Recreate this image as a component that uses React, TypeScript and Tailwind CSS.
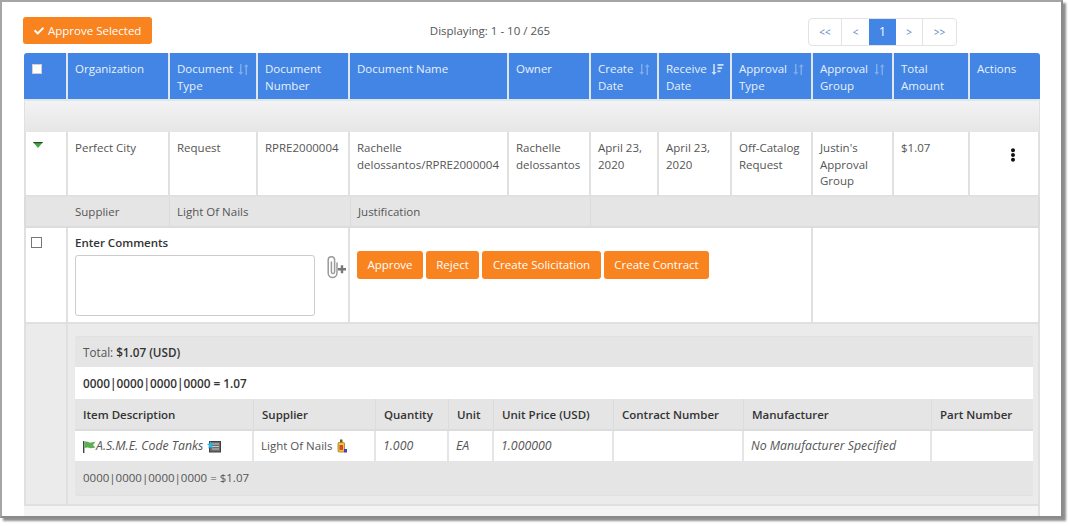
import React from 'react';
import { FaCheck, FaEllipsisV } from 'react-icons/fa';

const SortIcon = ({ active = false }: { active?: boolean }) =>
  active ? (
    <svg width="13" height="13" viewBox="0 0 13 13" className="shrink-0 text-[#cfe0f8]" fill="currentColor">
      <path d="M2.2 1h1.6v8h1.7L3 12 .5 9h1.7z" />
      <rect x="6.5" y="1" width="6" height="1.8" />
      <rect x="6.5" y="4.2" width="4.6" height="1.8" />
      <rect x="6.5" y="7.4" width="3" height="1.8" />
    </svg>
  ) : (
    <svg width="13" height="13" viewBox="0 0 13 13" className="shrink-0 text-[#7fabec]" fill="currentColor">
      <path d="M3 1h1.5v8h1.6L3.8 12 1.4 9H3z" />
      <path d="M8.5 12H10V4h1.6L9.3 1 6.9 4h1.6z" />
    </svg>
  );

const PaperclipPlus = () => (
  <svg width="22" height="24" viewBox="0 0 22 24" fill="none" className="shrink-0 ml-[10px]">
    <path
      d="M12 8v10a4.4 4.4 0 0 1-8.8 0V5a3.2 3.2 0 0 1 6.4 0v12a1.6 1.6 0 0 1-3.2 0V7"
      stroke="#9a9a9a"
      strokeWidth="1.5"
      strokeLinecap="round"
    />
    <path d="M13 14.2h8M17 10.2v8" stroke="#777" strokeWidth="2.4" />
  </svg>
);

const FlagIcon = () => (
  <svg width="13" height="13" viewBox="0 0 13 13" className="shrink-0">
    <rect x="0" y="1" width="1.4" height="12" fill="#444" />
    <path d="M1.4 2c3-1.4 4.4 1 6.6.6 1.4-.2 2.6-.6 4.6-.8L10 5l2.4 2.6c-3 .4-4.6 1-6.6.2-1.6-.6-3-.2-4.4.4z" fill="#5fae57" />
  </svg>
);

const NotesIcon = () => (
  <svg width="14" height="13" viewBox="0 0 14 13" className="shrink-0">
    <rect x="2.5" y="1.5" width="11" height="10.5" fill="#6d6d6d" stroke="#3f3f3f" />
    <path d="M5 4h7M5 6.5h7M5 9h7" stroke="#c9c9c9" />
    <path d="M3.5 1l1 2.6 2.6.4-2 1.7.6 2.7-2.2-1.4L1.3 8.4l.6-2.7-1.9-1.7 2.6-.4z" fill="#2bb5ea" />
  </svg>
);

const BottleIcon = () => (
  <svg width="10" height="14" viewBox="0 0 10 14" className="shrink-0">
    <rect x="3" y="0.5" width="2.5" height="3" fill="#6b5a2a" />
    <rect x="1" y="3.5" width="6.5" height="9.5" rx="1" fill="#f0c53a" stroke="#8a6d1f" strokeWidth="0.7" />
    <rect x="2.5" y="6" width="3.5" height="5" fill="#d8462f" />
    <rect x="7" y="10" width="3" height="3.5" fill="#4a3fb5" />
  </svg>
);

type Head = { label: React.ReactNode; sort?: boolean; active?: boolean };

const heads: Head[] = [
  { label: 'Organization' },
  { label: <>Document<br />Type</>, sort: true },
  { label: <>Document<br />Number</> },
  { label: 'Document Name' },
  { label: 'Owner' },
  { label: <>Create<br />Date</>, sort: true },
  { label: <>Receive<br />Date</>, sort: true, active: true },
  { label: <>Approval<br />Type</>, sort: true },
  { label: <>Approval<br />Group</>, sort: true },
  { label: <>Total<br />Amount</> },
  { label: 'Actions' },
];

const colWidths = [44, 102, 88, 92, 159, 82, 68, 73, 81, 81, 76, 70];

const rowCells: React.ReactNode[] = [
  'Perfect City',
  'Request',
  'RPRE2000004',
  <>Rachelle<br />delossantos/RPRE2000004</>,
  <>Rachelle<br />delossantos</>,
  <>April 23,<br />2020</>,
  <>April 23,<br />2020</>,
  <>Off-Catalog<br />Request</>,
  <>Justin's<br />Approval<br />Group</>,
  '$1.07',
];

const innerCols = [179, 122, 73, 45, 120, 130, 188, 101];
const innerHeads = ['Item Description', 'Supplier', 'Quantity', 'Unit', 'Unit Price (USD)', 'Contract Number', 'Manufacturer', 'Part Number'];

const cellBorder = 'border-r-2 border-b-2 border-[#e0e0e0]';

export default function App() {
  return (
    <div className="w-[1069px] h-[526px] bg-white overflow-hidden">
      <div
        className="w-[1063px] h-[518px] bg-white border-2 border-[#a5a5a5] border-r-[#8a8a8a] border-b-[#8a8a8a] shadow-[3px_3px_2px_#8f8f8f] overflow-hidden text-[11.5px] leading-[16.5px] text-[#555]"
        style={{ fontFamily: '"Open Sans", sans-serif' }}
      >
        <div className="flex items-start h-[51px] pl-[21px] pt-[15px]">
          <button className="flex items-center gap-[4px] w-[129px] h-[27px] pl-[11px] pt-[1px] rounded-[3px] bg-[#f9831f] text-white">
            <FaCheck className="w-[10px] h-[10px]" />
            Approve Selected
          </button>
          <div className="w-[656px] pt-[6px] pl-[20px] text-center">
            Displaying: 1 - 10 / 265
          </div>
          <div className="flex h-[28px] mt-[1px] border border-[#e3e3e3] rounded-[4px] text-[10px] text-[#5b84c4]">
            <span className="w-[33px] flex items-center justify-center border-r border-[#e3e3e3]">&lt;&lt;</span>
            <span className="w-[27px] flex items-center justify-center">&lt;</span>
            <span className="w-[27px] flex items-center justify-center bg-[#4285e5] text-white text-[12px]">1</span>
            <span className="w-[27px] flex items-center justify-center border-r border-[#e3e3e3]">&gt;</span>
            <span className="w-[33px] flex items-center justify-center">&gt;&gt;</span>
          </div>
        </div>

        <table className="ml-[22px] w-[1016px] table-fixed border-separate border-spacing-0">
          <colgroup>
            {colWidths.map((w, i) => (
              <col key={i} style={{ width: w }} />
            ))}
          </colgroup>
          <thead>
            <tr>
              <th className="h-[48px] align-top bg-[#4285e5] border-r-2 border-b-2 border-[#dfe6ee] pl-[8px] pt-[11px] text-left rounded-tl-[3px]">
                <span className="block w-[10px] h-[10px] bg-white border border-[#d0d0d0]" />
              </th>
              {heads.map((h, i) => (
                <th
                  key={i}
                  className={`h-[48px] align-top bg-[#4285e5] border-b-2 border-[#dfe6ee] pl-[7px] pr-[6px] pt-[8px] text-left font-normal text-[#e8f0fb] ${i < heads.length - 1 ? 'border-r-2' : 'rounded-tr-[3px]'}`}
                >
                  <div className="flex justify-between">
                    <span>{h.label}</span>
                    {h.sort && <span className="pt-[2px]"><SortIcon active={h.active} /></span>}
                  </div>
                </th>
              ))}
            </tr>
          </thead>
          <tbody>
            <tr>
              <td colSpan={12} className="h-[31px] bg-linear-to-b from-[#f3f3f3] to-[#e6e6e6] border-l border-r border-[#e0e0e0]" />
            </tr>
            <tr>
              <td className={`h-[65px] align-top border-l-2 pl-[7px] pt-[10px] ${cellBorder}`}>
                <svg width="10" height="6" viewBox="0 0 10 6" className="block">
                  <path d="M0 0h10L5 6z" fill="#3fa84a" />
                  <path d="M0 0h10L9 1.3H1z" fill="#244a2a" />
                </svg>
              </td>
              {rowCells.map((c, i) => (
                <td key={i} className={`align-top pl-[7px] pt-[8px] ${cellBorder}`}>{c}</td>
              ))}
              <td className="align-top border-b-2 border-r-2 border-[#e0e0e0] pt-[16px] pl-[37px] text-[#111]">
                <FaEllipsisV className="w-[12px] h-[14px]" />
              </td>
            </tr>
            <tr className="bg-[#e5e5e5]">
              <td className="h-[31px] border-l-2 border-b-2 border-[#dcdcdc]" />
              <td className="pl-[7px] pt-[2px] border-b-2 border-r border-[#dcdcdc]">Supplier</td>
              <td colSpan={2} className="pl-[7px] pt-[2px] border-b-2 border-[#dcdcdc]">Light Of Nails</td>
              <td colSpan={2} className="pl-[7px] pt-[2px] border-b-2 border-l border-r border-[#dcdcdc]">Justification</td>
              <td colSpan={6} className="border-b-2 border-r-2 border-[#dcdcdc]" />
            </tr>
            <tr>
              <td className={`h-[96px] align-top border-l-2 pl-[5px] pt-[9px] ${cellBorder}`}>
                <span className="block w-[11px] h-[11px] bg-white border border-[#777]" />
              </td>
              <td colSpan={3} className={`align-top pl-[7px] pt-[7px] ${cellBorder}`}>
                <div className="font-semibold text-[#333]">Enter Comments</div>
                <div className="flex mt-[3px]">
                  <textarea className="block w-[240px] h-[61px] border border-[#ccc] rounded-[3px] resize-none" />
                  <PaperclipPlus />
                </div>
              </td>
              <td colSpan={5} className={`align-top pl-[7px] pt-[23px] ${cellBorder}`}>
                <div className="flex gap-[3px] text-white">
                  <button className="w-[66px] h-[28px] pt-[1px] rounded-[3px] bg-[#f9831f]">Approve</button>
                  <button className="w-[53px] h-[28px] pt-[1px] rounded-[3px] bg-[#f9831f]">Reject</button>
                  <button className="w-[119px] h-[28px] pt-[1px] rounded-[3px] bg-[#f9831f]">Create Solicitation</button>
                  <button className="w-[105px] h-[28px] pt-[1px] rounded-[3px] bg-[#f9831f]">Create Contract</button>
                </div>
              </td>
              <td colSpan={3} className={cellBorder} />
            </tr>
            <tr className="bg-[#ebebeb]">
              <td className="h-[182px] border-l-2 border-r-2 border-b-2 border-[#e0e0e0]" />
              <td colSpan={11} className="align-top pl-[7px] pr-[5px] pt-[12px] border-b-2 border-r-2 border-[#e0e0e0]">
                <div className="border-y border-[#e0e0e0] rounded-[3px] bg-[#e5e5e5]">
                  <div className="h-[30px] flex items-center pl-[8px] text-[11.7px]">
                    <span>Total:&nbsp;</span>
                    <span className="font-semibold text-[#333]">$1.07 (USD)</span>
                  </div>
                  <div className="h-[32px] flex items-center pl-[8px] bg-white font-semibold text-[#333] text-[11.8px]">
                    0000|0000|0000|0000 = 1.07
                  </div>
                  <table className="w-[958px] table-fixed border-separate border-spacing-0">
                    <colgroup>
                      {innerCols.map((w, i) => (
                        <col key={i} style={{ width: w }} />
                      ))}
                    </colgroup>
                    <thead>
                      <tr>
                        {innerHeads.map((h, i) => (
                          <th key={i} className="h-[32px] pl-[8px] pt-[3px] text-left font-semibold text-[#333] border-r border-b-2 border-[#dcdcdc] last:border-r-0">{h}</th>
                        ))}
                      </tr>
                    </thead>
                    <tbody>
                      <tr className="bg-white">
                        <td className="h-[30px] pl-[8px] border-r-2 border-[#e5e5e5]">
                          <div className="flex items-center italic text-[12.3px]">
                            <FlagIcon />
                            <span>A.S.M.E. Code Tanks</span>
                            <span className="ml-[4px]"><NotesIcon /></span>
                          </div>
                        </td>
                        <td className="pl-[7px] border-r-2 border-[#e5e5e5]">
                          <div className="flex items-center gap-[5px]">
                            Light Of Nails
                            <BottleIcon />
                          </div>
                        </td>
                        <td className="pl-[7px] italic text-[12.3px] border-r-2 border-[#e5e5e5]">1.000</td>
                        <td className="pl-[7px] italic text-[12.3px] border-r-2 border-[#e5e5e5]">EA</td>
                        <td className="pl-[7px] italic text-[12.3px] border-r-2 border-[#e5e5e5]">1.000000</td>
                        <td className="border-r-2 border-[#e5e5e5]" />
                        <td className="pl-[7px] italic text-[12.3px] border-r-2 border-[#e5e5e5]">No Manufacturer Specified</td>
                        <td />
                      </tr>
                    </tbody>
                  </table>
                  <div className="h-[34px] flex items-center pl-[8px]">0000|0000|0000|0000 = $1.07</div>
                </div>
              </td>
            </tr>
            <tr>
              <td colSpan={12} className="h-[14px] bg-[#f4f4f4] border-r-2 border-[#e0e0e0]" />
            </tr>
          </tbody>
        </table>
      </div>
    </div>
  );
}
